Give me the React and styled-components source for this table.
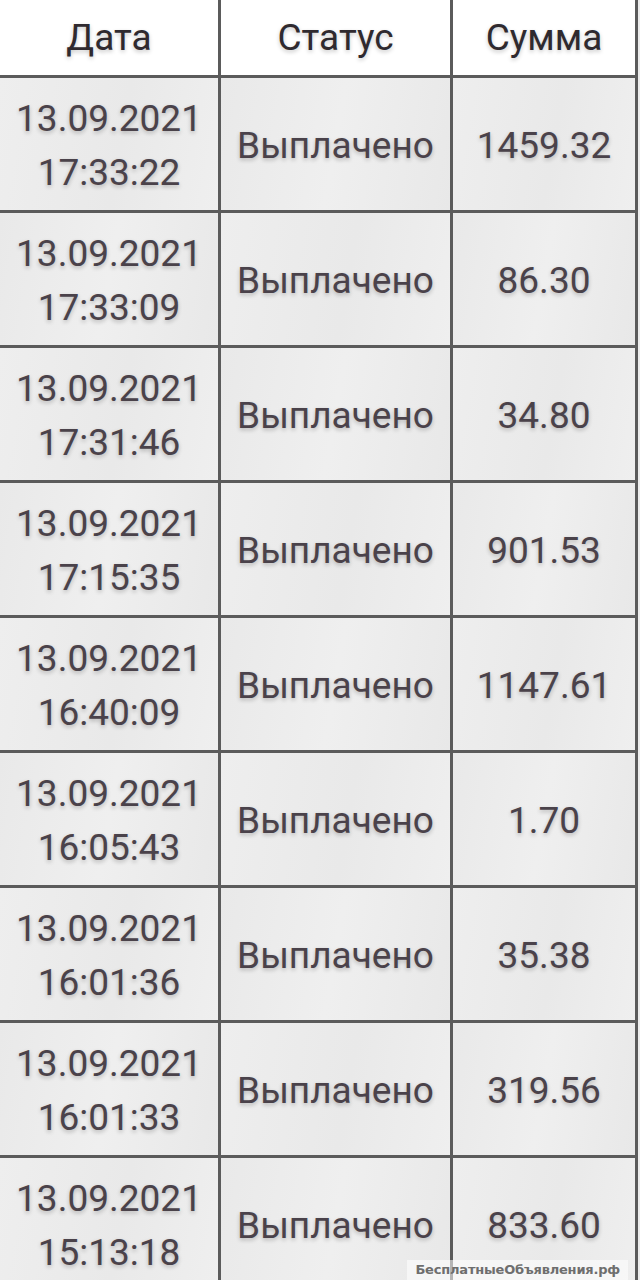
import React from 'react';
import styled, { createGlobalStyle } from 'styled-components';

const GlobalStyle = createGlobalStyle`
  html, body {
    margin: 0;
    padding: 0;
    background: #ececec;
  }
  body {
    font-family: Roboto, 'Noto Sans', sans-serif;
  }
`;

const Page = styled.div`
  position: relative;
  width: 640px;
  height: 1280px;
  overflow: hidden;
  background: #ececec;
`;

const Table = styled.div`
  display: grid;
  grid-template-columns: 218px 229px 182px;
  grid-template-rows: 75px;
  grid-auto-rows: 132px;
  gap: 3px;
  width: 635px;
  padding-right: 3px;
  background: #5b5b5b;
`;

const HeadCell = styled.div`
  display: flex;
  align-items: center;
  justify-content: center;
  background: #ffffff;
  color: #2f2a2f;
  font-size: 37px;
  padding-bottom: 1px;
  text-shadow: 0 2px 4px rgba(0, 0, 0, 0.22);
`;

const Cell = styled.div`
  display: flex;
  flex-direction: column;
  align-items: center;
  justify-content: center;
  padding-top: 3px;
  background: ${({ $shade }) =>
    $shade
      ? 'linear-gradient(100deg, #e9e9e9 0%, #efefef 50%, #e8e8e8 100%)'
      : 'linear-gradient(100deg, #eeeeee 0%, #e9e9e9 55%, #efefef 100%)'};
  color: #4a424a;
  font-size: 37px;
  line-height: 54px;
  text-shadow: 0 2px 4px rgba(0, 0, 0, 0.24);
`;

const Watermark = styled.div`
  position: absolute;
  right: 12px;
  bottom: 0;
  padding: 2px 8px;
  background: rgba(255, 255, 255, 0.55);
  color: #6e6e6e;
  font-family: 'DejaVu Sans', sans-serif;
  font-weight: bold;
  font-size: 13px;
  line-height: 16px;
  letter-spacing: -0.2px;
`;

const rows = [
  ['13.09.2021', '17:33:22', '1459.32'],
  ['13.09.2021', '17:33:09', '86.30'],
  ['13.09.2021', '17:31:46', '34.80'],
  ['13.09.2021', '17:15:35', '901.53'],
  ['13.09.2021', '16:40:09', '1147.61'],
  ['13.09.2021', '16:05:43', '1.70'],
  ['13.09.2021', '16:01:36', '35.38'],
  ['13.09.2021', '16:01:33', '319.56'],
  ['13.09.2021', '15:13:18', '833.60'],
];

export default function App() {
  return (
    <Page>
      <GlobalStyle />
      <Table>
        <HeadCell>Дата</HeadCell>
        <HeadCell>Статус</HeadCell>
        <HeadCell>Сумма</HeadCell>
        {rows.map(([date, time, sum], i) => (
          <React.Fragment key={i}>
            <Cell $shade={i % 2 === 1}>
              <span>{date}</span>
              <span>{time}</span>
            </Cell>
            <Cell $shade={i % 2 === 0}>Выплачено</Cell>
            <Cell $shade={i % 2 === 1}>{sum}</Cell>
          </React.Fragment>
        ))}
      </Table>
      <Watermark>БесплатныеОбъявления.рф</Watermark>
    </Page>
  );
}
